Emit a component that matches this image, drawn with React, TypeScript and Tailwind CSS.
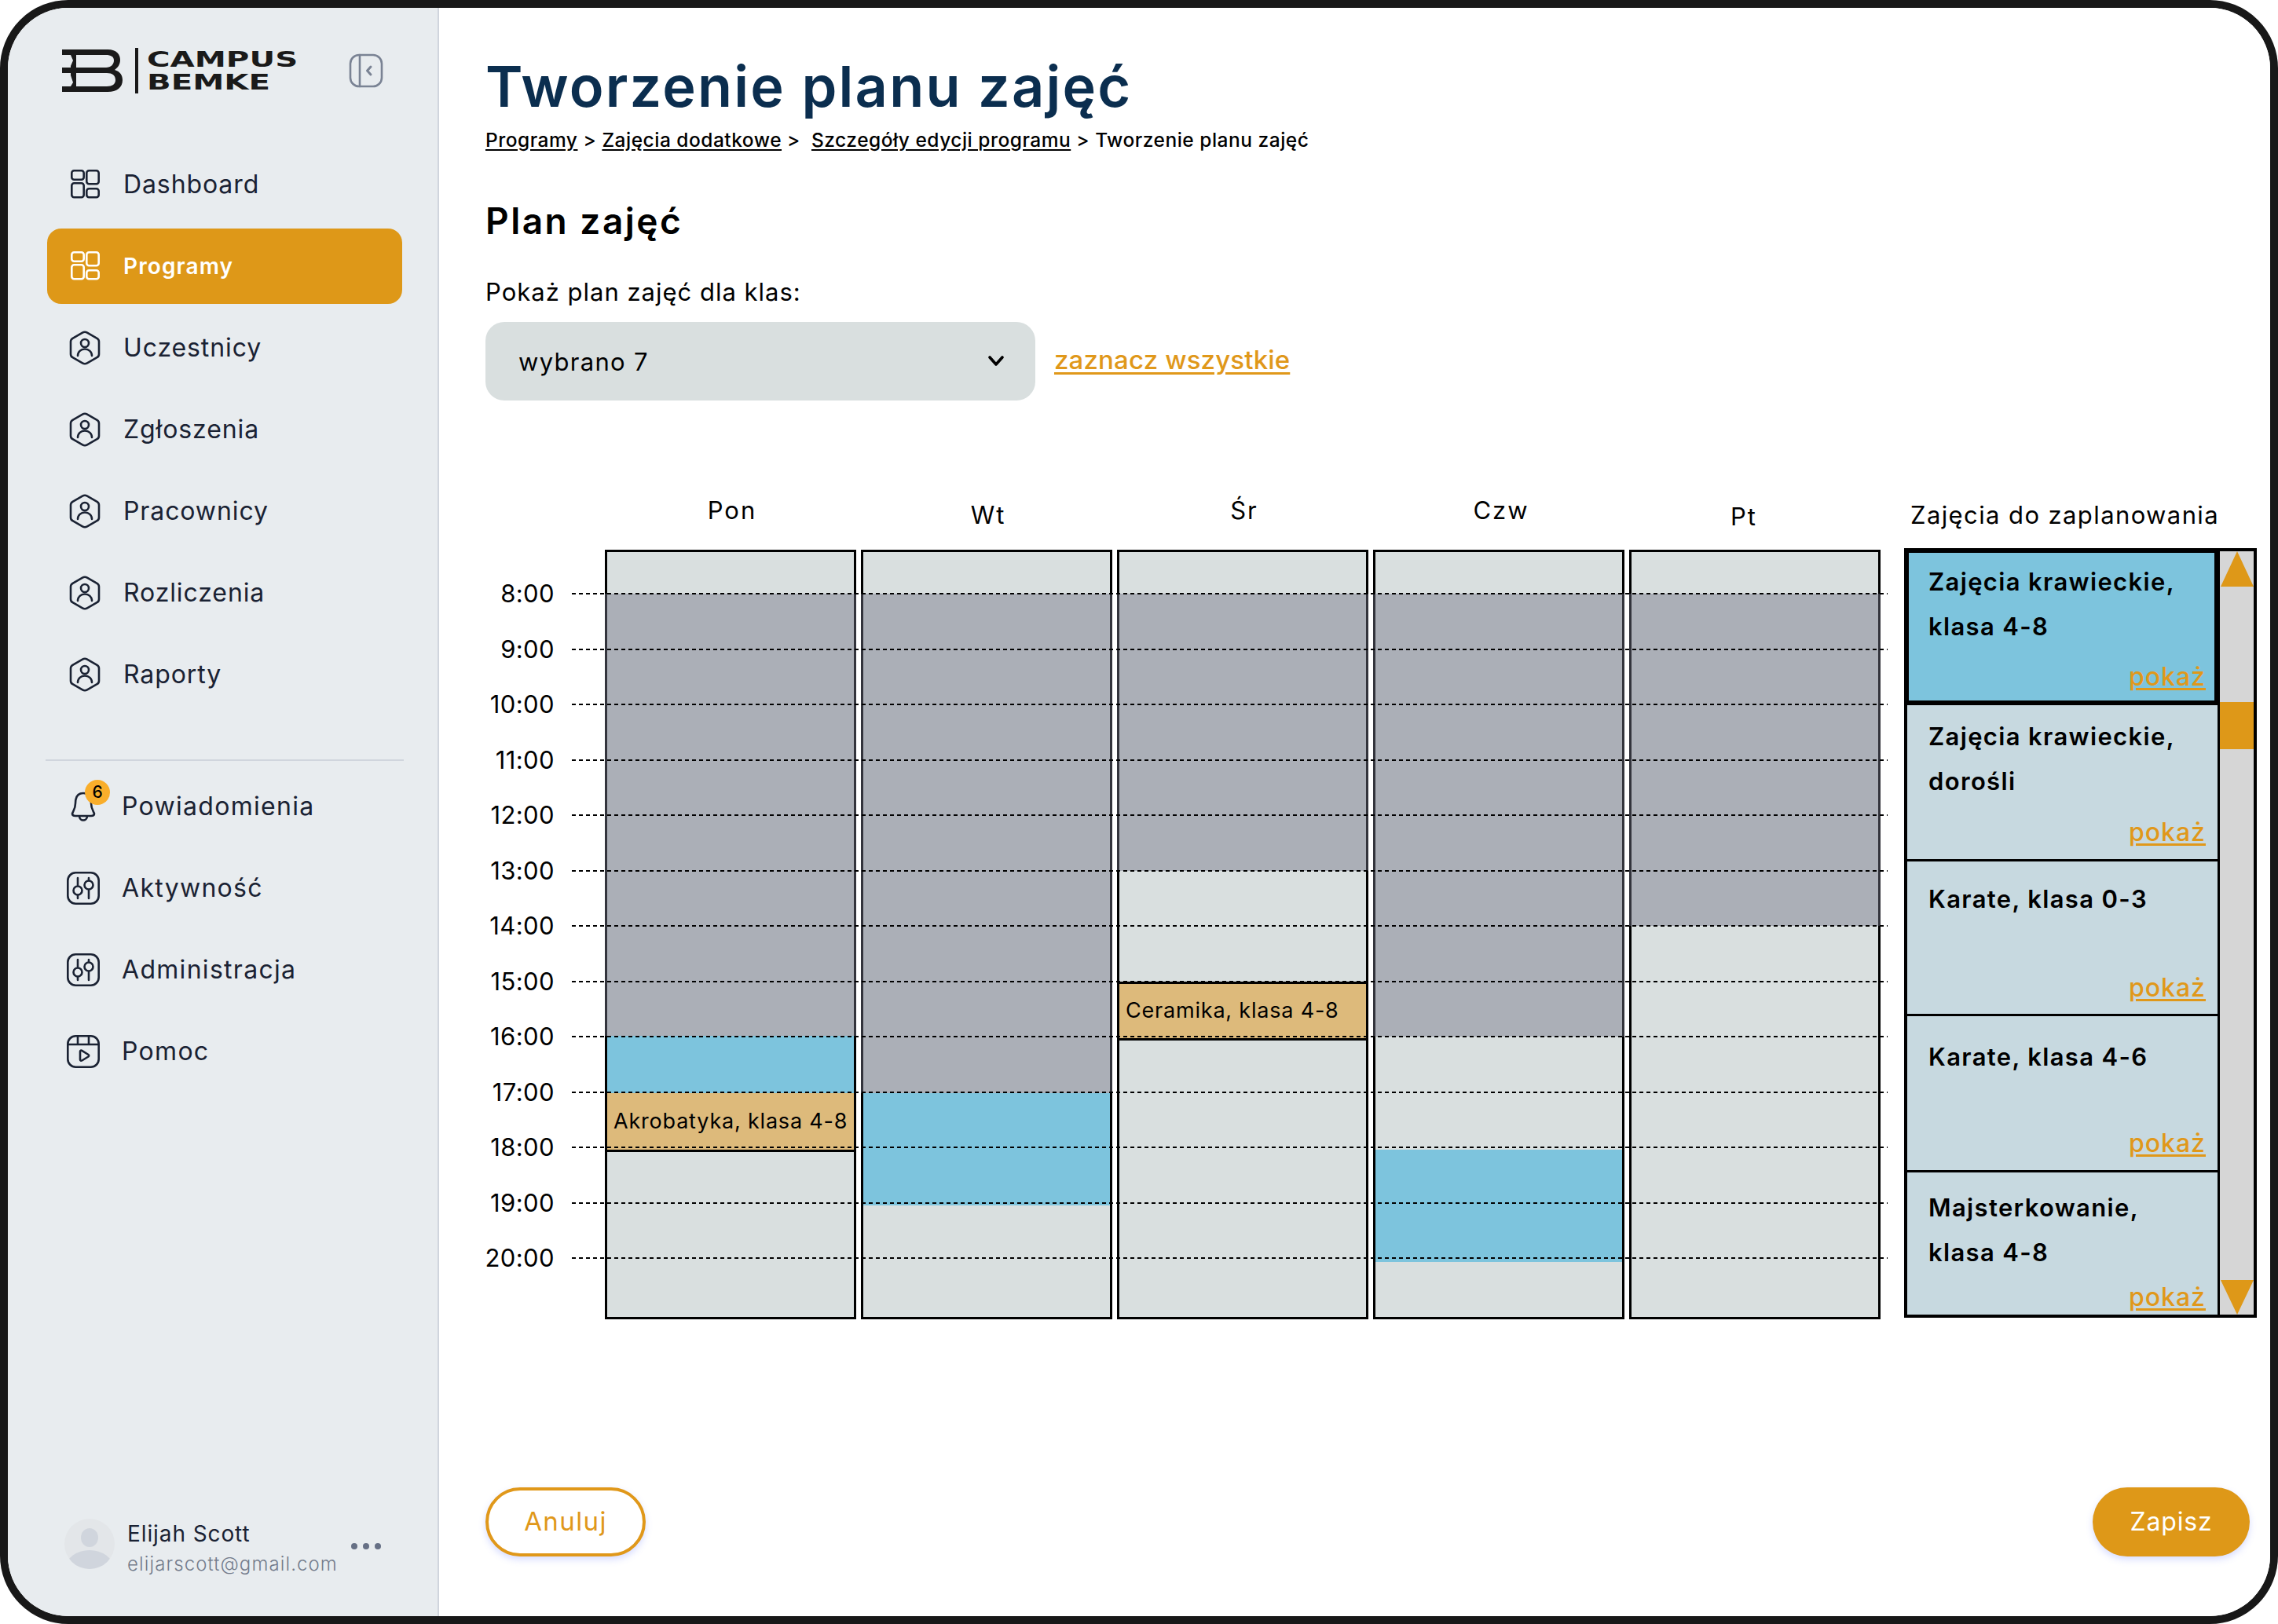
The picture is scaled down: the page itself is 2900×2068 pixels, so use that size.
const navTop = ['Dashboard', 'Programy', 'Uczestnicy', 'Zgłoszenia', 'Pracownicy', 'Rozliczenia', 'Raporty']

const days = [
  {
    name: 'Pon',
    head: 'pl-[4px]',
    blocks: [
      { h: 'h-[53px]', c: 'bg-[#D9DFDF]' },
      { h: 'h-[563px]', c: 'gray' },
      { h: 'h-[73px]', c: 'bg-[#7DC4DD]' },
      { h: 'h-[75px]', c: 'event', text: 'Akrobatyka, klasa 4-8' },
    ],
  },
  {
    name: 'Wt',
    head: 'pt-[6px] pl-[4px]',
    blocks: [
      { h: 'h-[53px]', c: 'bg-[#D9DFDF]' },
      { h: 'h-[636px]', c: 'gray' },
      { h: 'h-[143px]', c: 'bg-[#7DC4DD]' },
    ],
  },
  {
    name: 'Śr',
    head: 'pl-[4px]',
    blocks: [
      { h: 'h-[53px]', c: 'bg-[#D9DFDF]' },
      { h: 'h-[353px]', c: 'gray' },
      { h: 'h-[141px]', c: 'bg-[#D9DFDF]' },
      { h: 'h-[75px]', c: 'event top', text: 'Ceramika, klasa 4-8' },
    ],
  },
  {
    name: 'Czw',
    head: 'pl-[6px]',
    blocks: [
      { h: 'h-[53px]', c: 'bg-[#D9DFDF]' },
      { h: 'h-[564px]', c: 'gray' },
      { h: 'h-[144px]', c: 'bg-[#D9DFDF]' },
      { h: 'h-[143px]', c: 'bg-[#7DC4DD]' },
    ],
  },
  {
    name: 'Pt',
    head: 'pt-[8px] pr-[28px]',
    blocks: [
      { h: 'h-[53px]', c: 'bg-[#D9DFDF]' },
      { h: 'h-[423px]', c: 'gray' },
    ],
  },
]

const hours = ['8:00', '9:00', '10:00', '11:00', '12:00', '13:00', '14:00', '15:00', '16:00', '17:00', '18:00', '19:00', '20:00']

const todo = [
  { lines: ['Zajęcia krawieckie,', 'klasa 4-8'], box: 'h-[196px] bg-[#7DC4DD] border-t-[2px] border-l-[2px] border-r-[4px] border-b-[6px] border-black', pad: 'pt-[9px] pl-[25px] pr-[11px] pb-[12px]' },
  { lines: ['Zajęcia krawieckie,', 'dorośli'], box: 'h-[196px] bg-[#C7D9E0]', pad: 'pt-[12px] pl-[27px] pr-[15px] pb-[16px]' },
  { lines: ['Karate, klasa 0-3'], box: 'h-[197px] bg-[#C7D9E0] border-t-[3px] border-black', pad: 'pt-[20px] pl-[27px] pr-[15px] pb-[15px]' },
  { lines: ['Karate, klasa 4-6'], box: 'h-[199px] bg-[#C7D9E0] border-t-[3px] border-black', pad: 'pt-[24px] pl-[27px] pr-[15px] pb-[16px]' },
  { lines: ['Majsterkowanie,', 'klasa 4-8'], box: 'flex-1 bg-[#C7D9E0] border-t-[3px] border-black', pad: 'pt-[17px] pl-[27px] pr-[15px] pb-[4px]' },
]

function GridIcon({ color }: { color: string }) {
  return (
    <svg width="40" height="38" viewBox="0 0 40 38" fill="none" stroke={color} strokeWidth="2.6">
      <rect x="3.3" y="1.3" width="15.4" height="11.4" rx="3" />
      <rect x="22.3" y="1.3" width="15.4" height="17" rx="3" />
      <rect x="3.3" y="17.3" width="15.4" height="18" rx="3" />
      <rect x="22.3" y="24.3" width="15.4" height="11" rx="3" />
    </svg>
  )
}

function HexUserIcon() {
  return (
    <svg width="40" height="44" viewBox="0 0 40 44" fill="none" stroke="#1A2233" strokeWidth="2.6" strokeLinejoin="round" strokeLinecap="round">
      <path d="M17 2.6 a6 6 0 0 1 6 0 L35.5 9.8 a5 5 0 0 1 2.5 4.3 V29.9 a5 5 0 0 1 -2.5 4.3 L23 41.4 a6 6 0 0 1 -6 0 L4.5 34.2 a5 5 0 0 1 -2.5 -4.3 V14.1 a5 5 0 0 1 2.5 -4.3 Z" />
      <circle cx="20" cy="16" r="5" />
      <path d="M11 32 c0 -5 4 -8.5 9 -8.5 s9 3.5 9 8.5" />
    </svg>
  )
}

function SlidersIcon() {
  return (
    <svg width="42" height="42" viewBox="0 0 42 42" fill="none" stroke="#1A2233" strokeWidth="2.6" strokeLinecap="round">
      <rect x="1.3" y="1.3" width="39.4" height="39.4" rx="10" />
      <path d="M14 8 V17 M14 30 V34 M28 8 V11 M28 24 V34" />
      <circle cx="14" cy="24" r="5.5" />
      <circle cx="28" cy="17" r="5.5" />
    </svg>
  )
}

function PlayIcon() {
  return (
    <svg width="42" height="42" viewBox="0 0 42 42" fill="none" stroke="#1A2233" strokeWidth="2.6" strokeLinejoin="round">
      <rect x="1.3" y="1.3" width="39.4" height="39.4" rx="10" />
      <path d="M1.3 12 H40.7 M14 1.3 V12 M28 1.3 V12" />
      <path d="M17 21 a1.5 1.5 0 0 1 2.3 -1.2 L27.5 25 a1.5 1.5 0 0 1 0 2.5 L19.3 32.5 a1.5 1.5 0 0 1 -2.3 -1.2 Z" />
    </svg>
  )
}

function BellIcon() {
  return (
    <div className="relative w-[42px] h-[42px] shrink-0">
      <svg width="42" height="42" viewBox="0 0 42 42" fill="none" stroke="#1A2233" strokeWidth="2.6" strokeLinejoin="round" className="absolute left-0 top-0">
        <path d="M21 4 C13 4 11 11 11 17 C11 24 8 27 7 30 C7 32 8 33 11 33 H31 C34 33 35 32 35 30 C34 27 31 24 31 17 C31 11 29 4 21 4 Z" />
        <path d="M16 33 C16 37 19 38.5 21 38.5 S26 37 26 33" />
      </svg>
      <span className="absolute left-[23px] -top-[13px] w-[32px] h-[32px] rounded-full bg-[#F9AE2B] flex items-center justify-center text-[21px] font-medium text-black">6</span>
    </div>
  )
}

function Logo() {
  return (
    <div className="flex items-center h-[58px]">
      <svg width="78" height="54" viewBox="0 0 78 54" fill="#1A1A1A" fillRule="evenodd" className="shrink-0">
        <path d="M0 0 H58 C70 0 74 7 74 13 C74 19 71 23 67 26 C74 28 77 33 77 39 C77 48 70 54 58 54 H0 V47 H11 L14 42 L11 33 V30 H0 V23 H11 V21 L14 14 L11 7 H0 Z M18 7 V23 H56 C62 23 66 19 66 14 C66 9 62 7 56 7 Z M18 30 V47 H57 C64 47 68 44 68 39 C68 33 64 30 57 30 Z" />
      </svg>
      <div className="w-[4px] h-[58px] bg-[#1A1A1A] ml-[15px] mr-[11px] shrink-0" />
      <div className="[font-family:'DejaVu_Sans',sans-serif] font-bold text-[#1A1A1A] text-[26px] leading-[29px] origin-left scale-x-[1.55] mt-[2px]">
        <div>CAMPUS</div>
        <div>BEMKE</div>
      </div>
    </div>
  )
}

function NavItem({ label, active }: { label: string; active?: boolean }) {
  return (
    <div className={`flex items-center h-[96px] pl-[28px] gap-[30px] rounded-[18px] ${active ? 'bg-[#DE9818]' : ''}`}>
      {label === 'Dashboard' ? <GridIcon color="#1A2233" /> : active ? <GridIcon color="#FFFFFF" /> : <HexUserIcon />}
      <span className={active ? 'text-[28px] font-semibold text-white tracking-[1.1px] -ml-[1px]' : 'text-[32px] text-[#1A2233] tracking-[0.9px] -ml-[1px]'}>{label}</span>
    </div>
  )
}

function NavItemLower({ label, icon }: { label: string; icon: React.ReactNode }) {
  return (
    <div className="flex items-center h-[96px] pl-[25px] gap-[28px]">
      {icon}
      <span className="text-[32px] text-[#1A2233] tracking-[1.3px]">{label}</span>
    </div>
  )
}

function Sidebar() {
  return (
    <aside className="w-[549px] shrink-0 h-full bg-[#E8ECEF] border-r-2 border-[#D0D5DD] flex flex-col pl-[50px] pr-[45px]">
      <div className="flex items-center justify-between pt-[51px] pl-[19px] pr-[24px]">
        <Logo />
        <svg width="44" height="44" viewBox="0 0 44 44" fill="none" stroke="#7A8394" strokeWidth="2.6" strokeLinecap="round" strokeLinejoin="round">
          <rect x="2" y="2" width="40" height="40" rx="11" />
          <path d="M14 2 V42" />
          <path d="M28 17 L23.5 22 L28 27" strokeWidth="3" />
        </svg>
      </div>

      <nav className="flex flex-col gap-2 mt-[68px]">
        {navTop.map((item) => (
          <NavItem key={item} label={item} active={item === 'Programy'} />
        ))}
      </nav>

      <div className="h-[2px] bg-[#D0D5DD] mt-[60px] -ml-[2px] w-[456px]" />

      <nav className="flex flex-col gap-2 mt-[10px]">
        <NavItemLower label="Powiadomienia" icon={<BellIcon />} />
        <NavItemLower label="Aktywność" icon={<SlidersIcon />} />
        <NavItemLower label="Administracja" icon={<SlidersIcon />} />
        <NavItemLower label="Pomoc" icon={<PlayIcon />} />
      </nav>

      <div className="mt-auto mb-[48px] flex items-center pl-[22px]">
        <svg width="64" height="64" viewBox="0 0 64 64" className="shrink-0">
          <defs>
            <clipPath id="avatar">
              <circle cx="32" cy="32" r="32" />
            </clipPath>
          </defs>
          <circle cx="32" cy="32" r="32" fill="#E3E6E9" />
          <g clipPath="url(#avatar)" fill="#D0D5DD">
            <ellipse cx="32" cy="24" rx="11" ry="12" />
            <ellipse cx="32" cy="62" rx="30" ry="22" />
          </g>
        </svg>
        <div className="ml-[16px] mt-[14px] flex flex-col w-[285px]">
          <span className="text-[28px] leading-[36px] text-[#1A2233] tracking-[0.9px]">Elijah Scott</span>
          <span className="text-[24px] leading-[36px] text-[#747C8C] mt-[3px] tracking-[1.1px] font-light">elijarscott@gmail.com</span>
        </div>
        <div className="flex gap-[7px] mt-[6px]">
          <div className="w-[8px] h-[8px] rounded-full bg-[#667085]" />
          <div className="w-[8px] h-[8px] rounded-full bg-[#667085]" />
          <div className="w-[8px] h-[8px] rounded-full bg-[#667085]" />
        </div>
      </div>
    </aside>
  )
}

function Block({ h, c, text }: { h: string; c: string; text?: string }) {
  if (c === 'gray') {
    return <div className={`${h} shrink-0 -mx-[3px] bg-[#ABAFB7] border-x-[3px] border-[#33343C]`} />
  }
  if (c.startsWith('event')) {
    return (
      <div className={`${h} shrink-0 bg-[#DDBA7B] border-b-[3px] border-black flex items-center pl-[8px] text-[27px] text-black tracking-[0.8px] whitespace-nowrap ${c.includes('top') ? 'border-t-[3px]' : ''}`}>
        {text}
      </div>
    )
  }
  return <div className={`${h} shrink-0 ${c}`} />
}

function Schedule() {
  return (
    <div className="flex mt-[122px]">
      <div className="w-[152px] shrink-0 pt-[72px] pr-[64px]">
        <div className="h-[17px]" />
        {hours.map((hour) => (
          <div key={hour} className="relative h-[70.5px] flex items-center justify-end text-[31px] text-black tracking-[0.4px] whitespace-nowrap">
            {hour}
            <div className="absolute z-10 left-[110px] top-1/2 -translate-y-[1px] w-[1675px] h-[2px] bg-[repeating-linear-gradient(90deg,#000_0,#000_5px,transparent_5px,transparent_9px)]" />
          </div>
        ))}
      </div>

      <div className="flex gap-[6px] shrink-0">
        {days.map((day) => (
          <div key={day.name} className="w-[320px] flex flex-col">
            <div className={`h-[70px] -mt-[2px] flex items-start justify-center text-[31px] text-black tracking-[2px] leading-[40px] ${day.head}`}>{day.name}</div>
            <div className="h-[980px] border-[3px] border-black bg-[#D9DFDF] flex flex-col">
              {day.blocks.map((b, i) => (
                <Block key={i} h={b.h} c={b.c} text={b.text} />
              ))}
            </div>
          </div>
        ))}
      </div>

      <div className="ml-[30px] w-[449px] shrink-0 flex flex-col">
        <div className="h-[66px] pl-[8px] pt-[4px] text-[31px] text-black tracking-[1.4px] leading-[40px] whitespace-nowrap">Zajęcia do zaplanowania</div>
        <div className="h-[980px] border-[4px] border-black flex">
          <div className="w-[395px] shrink-0 flex flex-col">
            {todo.map((item, i) => (
              <div key={i} className={`${item.box} ${item.pad} flex flex-col justify-between`}>
                <div className="text-[31px] leading-[56.5px] font-semibold text-black tracking-[1.35px] whitespace-nowrap">
                  {item.lines.map((line) => (
                    <div key={line}>{line}</div>
                  ))}
                </div>
                <a className="self-end text-[32px] leading-[36px] font-medium text-[#E0981A] tracking-[1px] underline underline-offset-[3px]">pokaż</a>
              </div>
            ))}
          </div>
          <div className="flex-1 border-l-[3px] border-black bg-[#D6D6D6] flex flex-col items-center justify-between relative">
            <div className="w-0 h-0 border-x-[21.5px] border-x-transparent border-b-[45px] border-b-[#DE9818]" />
            <div className="absolute left-0 right-0 top-[192px] h-[60px] bg-[#DE9818]" />
            <div className="w-0 h-0 border-x-[21.5px] border-x-transparent border-t-[44px] border-t-[#DE9818]" />
          </div>
        </div>
      </div>
    </div>
  )
}

export default function App() {
  return (
    <div className="w-[2900px] h-[2068px] bg-white [font-family:Inter,sans-serif]">
      <div className="w-full h-full border-[10px] border-[#181818] rounded-[87px] overflow-hidden flex">
        <Sidebar />
        <main className="flex-1 bg-white flex flex-col pl-[59px] pr-[17px] min-w-0">
          <h1 className="mt-[56px] text-[72px] leading-[88px] font-semibold text-[#0B2E4F] tracking-[2.2px]">Tworzenie planu zajęć</h1>
          <div className="mt-[8px] text-[24.5px] leading-[32px] font-medium text-black tracking-[0.5px] whitespace-pre">
            <a className="underline underline-offset-[3px]">Programy</a>{' > '}
            <a className="underline underline-offset-[3px]">Zajęcia dodatkowe</a>{' >  '}
            <a className="underline underline-offset-[3px]">Szczegóły edycji programu</a>{' > Tworzenie planu zajęć'}
          </div>
          <h2 className="mt-[62px] text-[46px] leading-[50px] font-semibold text-black tracking-[2.5px]">Plan zajęć</h2>
          <div className="mt-[48px] text-[31px] leading-[36px] text-black tracking-[1px]">Pokaż plan zajęć dla klas:</div>
          <div className="mt-[20px] flex items-center gap-[24px]">
            <div className="w-[700px] h-[100px] rounded-[24px] bg-[#D9DFDF] flex items-center justify-between pl-[42px] pr-[38px]">
              <span className="text-[31px] text-black tracking-[1.3px] mt-[2px]">wybrano 7</span>
              <svg width="24" height="16" viewBox="0 0 24 16" fill="none" stroke="#000" strokeWidth="3.6" strokeLinecap="round" strokeLinejoin="round">
                <path d="M4 3 L12 12 L20 3" />
              </svg>
            </div>
            <a className="text-[33px] font-medium text-[#E0981A] underline underline-offset-[4px] tracking-[0.15px] -mt-[2px]">zaznacz wszystkie</a>
          </div>

          <Schedule />

          <div className="mt-auto mb-[76px] flex justify-between items-center pr-[9px]">
            <button className="w-[204px] h-[88px] rounded-full bg-white border-[4px] border-[#E0981A] text-[33px] tracking-[1.4px] text-[#E0981A] shadow-[0_4px_8px_rgba(100,120,255,0.25)]">Anuluj</button>
            <button className="w-[200px] h-[88px] rounded-full bg-[#DE9818] text-[32px] tracking-[0.8px] text-white shadow-[0_4px_8px_rgba(100,120,255,0.25)]">Zapisz</button>
          </div>
        </main>
      </div>
    </div>
  )
}
